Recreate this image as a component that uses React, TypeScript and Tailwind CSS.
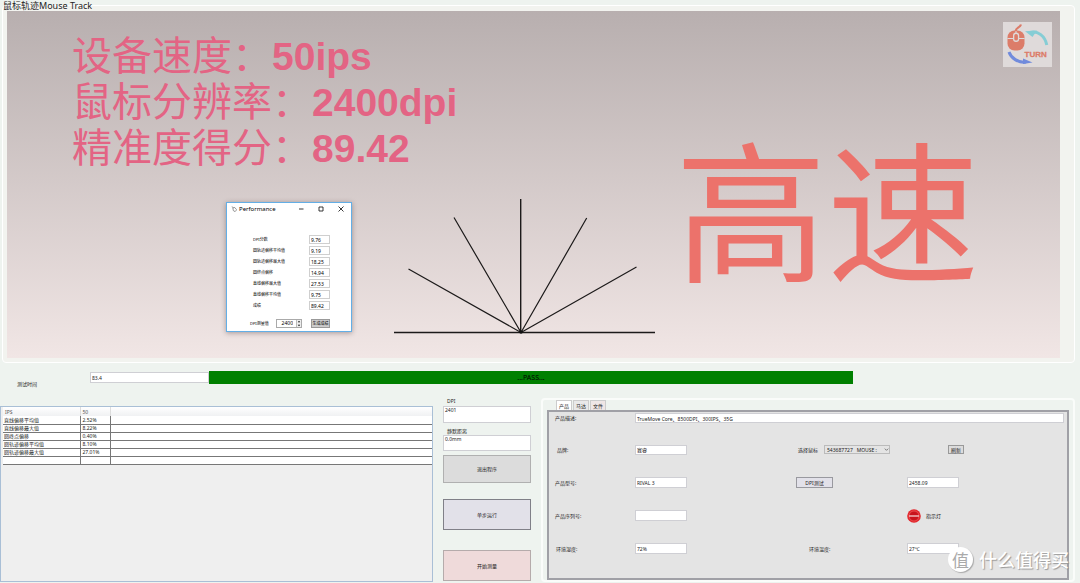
import React from "react";

const FONT = "font-['Noto_Sans','Noto_Sans_CJK_SC',sans-serif]";

const scores = [
  ["DPI分数", "9.76"],
  ["圆轨迹偏移平均值", "9.19"],
  ["圆轨迹偏移最大值", "18.25"],
  ["圆终点偏移", "14.94"],
  ["直线偏移最大值", "27.53"],
  ["直线偏移平均值", "9.75"],
  ["成绩", "89.42"],
];

const results = [
  ["直线偏移平均值", "2.52%"],
  ["直线偏移最大值", "8.22%"],
  ["圆终点偏移", "0.40%"],
  ["圆轨迹偏移平均值", "8.10%"],
  ["圆轨迹偏移最大值", "27.01%"],
  ["", ""],
];

const field =
  "block border border-[#cfcfd4] bg-white px-px text-[5px] leading-[6px] text-[#222] outline-none";

function Logo() {
  return (
    <svg viewBox="0 0 49 45" className="absolute right-2 top-[11px] h-[45px] w-[49px] bg-[#dfdada]">
      <rect x="4.500" y="8.500" width="17" height="20" rx="7" fill="#dc7c69" />
      <path d="M4.500 16.500H21.500M13 8.500V12" stroke="#dfdada" strokeWidth="1" />
      <rect x="10" y="10.500" width="6.200" height="9.500" rx="3" fill="#dfdada" />
      <rect x="11.300" y="12" width="3.600" height="6.600" rx="1.700" fill="#dc7c69" />
      <path d="M12.800 9C12.500 5.500 17 6 18 2.500" stroke="#dc7c69" strokeWidth="2.200" fill="none" />
      <path d="M27 10.500C35 8.500 42 14 43.800 23" stroke="#86cdd5" strokeWidth="3" fill="none" />
      <path d="M22 9.300L34 8.500L29.500 15Z" fill="#86cdd5" />
      <path d="M6 30C8 36 15 41 23 40" stroke="#718bdc" strokeWidth="3" fill="none" />
      <path d="M20 36.500L29.500 40.500L20 42Z" fill="#718bdc" />
      <text x="21.500" y="34.500" fontSize="8" fontWeight="700" fontFamily="Liberation Sans" fill="#dc7c69" stroke="#dc7c69" strokeWidth="0.300">
        TURN
      </text>
    </svg>
  );
}

function Tracks() {
  return (
    <svg viewBox="0 0 264 138" className="absolute bottom-[22px] left-[386px] h-[138px] w-[264px]">
      <g stroke="#1c1a1a" strokeWidth="1.200" fill="none">
        <path d="M1 134.500H262" strokeWidth="1.500" />
        <path d="M127.700 134.500V1" strokeWidth="1.400" />
        <path d="M128 134.500L15.500 71M128 134.500L61 19.500M128 134.500L193.700 20M128 134.500L243.500 69" />
      </g>
      <circle cx="128" cy="134" r="1.800" fill="#111" />
    </svg>
  );
}

function PerformanceDialog() {
  return (
    <section
      aria-label="Performance"
      className="absolute left-[219px] top-[191px] w-[126px] border border-[#63aee6] bg-white pb-[2px] text-[4px] text-black shadow-[0_1px_5px_rgba(60,40,40,0.4)]"
    >
      <header className="flex h-[12px] items-center pl-1 text-[6px]">
        <svg viewBox="0 0 8 8" className="mr-[2px] h-[6px] w-[6px]" fill="none" stroke="#555" strokeWidth="0.800">
          <path d="M1 1L3 2M2.500 2.500L5 2L7.500 5L5.500 7.500L3 6Z" />
        </svg>
        Performance
        <div className="ml-auto flex">
          <button aria-label="最小化" className="flex w-5 justify-center">
            <svg viewBox="0 0 6 6" className="h-[6px] w-[6px]" stroke="#222" strokeWidth="0.900"><path d="M1 3H5.500" /></svg>
          </button>
          <button aria-label="最大化" className="flex w-5 justify-center">
            <svg viewBox="0 0 6 6" className="h-[6px] w-[6px]" stroke="#222" strokeWidth="0.900" fill="none"><path d="M1 1H5V5H1Z" /></svg>
          </button>
          <button aria-label="关闭" className="flex w-5 justify-center">
            <svg viewBox="0 0 6 6" className="h-[6px] w-[6px]" stroke="#222" strokeWidth="0.900"><path d="M0.500 0.500L5.500 5.500M5.500 0.500L0.500 5.500" /></svg>
          </button>
        </div>
      </header>
      <div className="pl-[26px] pr-[21px] pt-[19px]">
        {scores.map(([label, value], i) => (
          <div key={label} className="flex h-[11px] items-center justify-between">
            <label htmlFor={"score" + i}>{label}</label>
            <input
              id={"score" + i}
              defaultValue={value}
              className="h-[9px] w-[21px] border border-[#cfcfcf] px-px text-[5px] outline-none"
            />
          </div>
        ))}
      </div>
      <div className="mt-[7px] flex h-[11px] items-center pl-[23px] pr-[21px]">
        <label htmlFor="dpi-measure" className="w-[26px]">DPI测量值</label>
        <div className="flex h-[9px] w-[26px] border border-[#aaa]">
          <input id="dpi-measure" defaultValue="2400" className="w-[19px] pr-[3px] text-right text-[5px] outline-none" />
          <div className="flex w-[5px] flex-col justify-between border-l border-[#bbb] bg-[#eee]">
            <button aria-label="增加" className="flex h-[3px] justify-center">
              <svg viewBox="0 0 4 3" className="h-[3px] w-[4px]"><path d="M2 0.800L3.200 2.200H0.800Z" /></svg>
            </button>
            <button aria-label="减少" className="flex h-[3px] justify-center">
              <svg viewBox="0 0 4 3" className="h-[3px] w-[4px]"><path d="M2 2.200L3.200 0.800H0.800Z" /></svg>
            </button>
          </div>
        </div>
        <button className="ml-auto h-[9px] w-[19px] border border-[#999] bg-[#ccc] leading-[6px]">生成成绩</button>
      </div>
    </section>
  );
}

function ResultTable() {
  return (
    <div className="min-w-0 border border-[#a9bfd6] bg-[#efefef] pl-[2px]">
      <table className="w-full border-collapse text-left text-[5px] leading-[6px] text-[#222]">
        <thead className="bg-gradient-to-b from-white to-[#f0f1f3] text-[#555]">
          <tr className="h-[9px]">
            <th className="w-[77px] border-r border-[#ddd] p-0 pl-[2px] font-normal">IPS</th>
            <th className="w-[30px] border-r border-[#ddd] p-0 pl-[2px] font-normal">50</th>
            <th className="p-0" />
          </tr>
        </thead>
        <tbody className="bg-white">
          {results.map(([name, value], i) => (
            <tr key={i} className="h-[8px] border-b border-[#777]">
              <td className="border-r border-[#777] p-0 pl-px">{name}</td>
              <td className="border-r border-[#777] p-0 pl-[2px]">{value}</td>
              <td className="p-0" />
            </tr>
          ))}
        </tbody>
      </table>
    </div>
  );
}

function Controls() {
  return (
    <div className="flex flex-col pt-[1px] text-[5px] leading-[6px] text-[#222]">
      <label htmlFor="dpi" className="-mt-[9px] pl-1">DPI</label>
      <textarea id="dpi" defaultValue="2401" className={field + " mt-[2px] h-[17px] resize-none overflow-hidden"} />
      <label htmlFor="static" className="mt-[5px] pl-1">静默距离</label>
      <textarea id="static" defaultValue="0.0mm" className={field + " mt-px h-[16px] resize-none overflow-hidden"} />
      <button className="mt-1 h-[28px] border border-[#b0b0b0] bg-[#dcdcdc]">退出程序</button>
      <button className="mt-4 h-[31px] border border-[#808088] bg-[#e2e1e9]">单步运行</button>
      <button className="mt-5 h-[31px] border border-[#b5abab] bg-[#efdada]">开始测量</button>
    </div>
  );
}

function ProductPanel() {
  return (
    <div className="-mt-[8px] min-w-0 rounded-sm border-2 border-[#fafcfa] px-[4px]">
      <div role="tablist" className="flex h-[10px] gap-px pl-[9px] text-[5px] leading-[8px] text-[#222]">
        <button role="tab" aria-selected="true" className="border border-b-0 border-[#ccc] bg-white px-[2px]">产品</button>
        <button role="tab" aria-selected="false" className="border border-b-0 border-[#ccc] bg-[#e9e9e9] px-[2px]">马达</button>
        <button role="tab" aria-selected="false" className="border border-b-0 border-[#ccc] bg-[#efe6e6] px-[2px]">文件</button>
      </div>
      <div className="border-2 border-[#a0a0a6] bg-[#e4e4e4] pb-[13px] pl-[6px] pr-[3px] text-[5px] leading-[6px] text-[#222]">
        <div className="mb-[9px] flex h-[12px] items-center">
          <label htmlFor="desc" className="w-[80px]">产品描述:</label>
          <input id="desc" defaultValue="TrueMove Core、8500DPI、300IPS、35G" className={field + " h-[10px] flex-1"} />
        </div>
        <div className="grid auto-rows-[33px] grid-cols-[80px_161fr_111fr_157fr] items-center">
          <label htmlFor="brand" className="pl-[2px]">品牌:</label>
          <input id="brand" defaultValue="赛睿" className={field + " h-[10px] w-[52px]"} />
          <div className="col-span-2 flex items-center">
            <label htmlFor="mouse" className="w-[28px] pl-[2px]">选择鼠标</label>
            <div className="relative">
              <select id="mouse" className="block h-[9px] w-[66px] appearance-none border border-[#bbb] bg-[#e4e4e4] pl-[2px] pr-2 text-[5px] leading-[6px]">
                <option>543687727&nbsp;&nbsp; MOUSE :</option>
              </select>
              <svg viewBox="0 0 6 6" className="pointer-events-none absolute right-px top-[2px] h-[5px] w-[5px]" fill="none" stroke="#555" strokeWidth="0.900">
                <path d="M1 2L3 4L5 2" />
              </svg>
            </div>
            <button className="ml-[58px] h-[9px] w-[16px] border border-[#999] bg-[#dcdcdc]">刷新</button>
          </div>

          <label htmlFor="model">产品型号:</label>
          <input id="model" defaultValue="RIVAL 3" className={field + " h-[11px] w-[52px]"} />
          <button className="h-[11px] w-[37px] border border-[#99999f] bg-[#e2e1e9]">DPI测试</button>
          <input aria-label="DPI测试" defaultValue="2458.09" className={field + " h-[11px] w-[52px]"} />

          <label htmlFor="serial">产品序列号:</label>
          <input id="serial" className={field + " h-[11px] w-[52px]"} />
          <span />
          <div className="flex items-center gap-[5px]">
            <svg viewBox="0 0 14 14" className="h-[14px] w-[14px]">
              <circle cx="7" cy="7" r="6.800" fill="#e3262c" />
              <circle cx="7" cy="7" r="5" fill="#c9131c" stroke="#ee5f5f" strokeWidth="0.700" />
              <rect x="2" y="6.400" width="10" height="1.200" fill="#f7dede" />
            </svg>
            指示灯
          </div>

          <label htmlFor="humidity" className="pl-px">环境湿度:</label>
          <input id="humidity" defaultValue="72%" className={field + " h-[11px] w-[52px]"} />
          <label htmlFor="temp" className="pl-[13px]">环境温度:</label>
          <input id="temp" defaultValue="27℃" className={field + " h-[11px] w-[52px]"} />
        </div>
      </div>
    </div>
  );
}

export default function App() {
  return (
    <div className={"relative min-h-screen overflow-hidden bg-[#eef3ef] " + FONT}>
      <h1 className="relative z-10 h-[5px] pl-[3px] text-[9px] leading-[12px] text-[#222]">鼠标轨迹Mouse Track</h1>
      <section className="mx-[2px] mr-[5px] rounded-sm border border-white bg-[#f2f3ef] pb-1 pl-1 pr-[14px] pt-[5px]">
        <div className="relative h-[347px] bg-gradient-to-b from-[#b8afaf] to-[#f1e6e5]">
          <div className="pl-[65px] pt-[22px] font-['Liberation_Sans','Noto_Sans_CJK_SC',sans-serif] text-[40px] leading-[46px] text-[#e36484]">
            <p>设备速度：<b className="text-[39px] leading-[40px]">50ips</b></p>
            <p>鼠标分辨率：<b className="text-[39px] leading-[40px]">2400dpi</b></p>
            <p>精准度得分：<b className="text-[39px] leading-[40px]">89.42</b></p>
          </div>
          <Logo />
          <Tracks />
          <PerformanceDialog />
          <p className="absolute right-[81px] top-[118px] font-['Noto_Sans_CJK_SC',sans-serif] text-[152px] leading-[152px] text-[#ec726b]">高速</p>
        </div>
      </section>

      <div className="mt-[8px] flex items-start pl-[17px]">
        <label htmlFor="time" className="mt-[10px] w-[73px] text-[5px] leading-[6px] text-[#222]">测试时间</label>
        <input id="time" defaultValue="83.4" className={field + " mt-px h-[11px] w-[119px]"} />
        <div className="mr-[227px] h-[13px] flex-1 bg-[#008000] text-center text-[7px] leading-[13px] text-black">...PASS...</div>
      </div>

      <div className="mt-[19px] grid grid-cols-[433fr_88px_534fr] gap-[10px] pb-[2px] pr-[5px]">
        <ResultTable />
        <Controls />
        <ProductPanel />
      </div>

      <div className="pointer-events-none absolute bottom-[12px] right-[11px] flex items-center gap-[6px] text-white">
        <span className="flex h-[25px] w-[25px] items-center justify-center rounded-full bg-white font-['Noto_Sans_CJK_SC',sans-serif] text-[17px] leading-[20px] text-[#aaa] shadow-[1px_1px_1px_#aaa]">值</span>
        <span className="font-['Noto_Sans_CJK_SC',sans-serif] text-[18px] font-medium leading-[25px] [text-shadow:1px_1px_1px_#999]">什么值得买</span>
      </div>
    </div>
  );
}
